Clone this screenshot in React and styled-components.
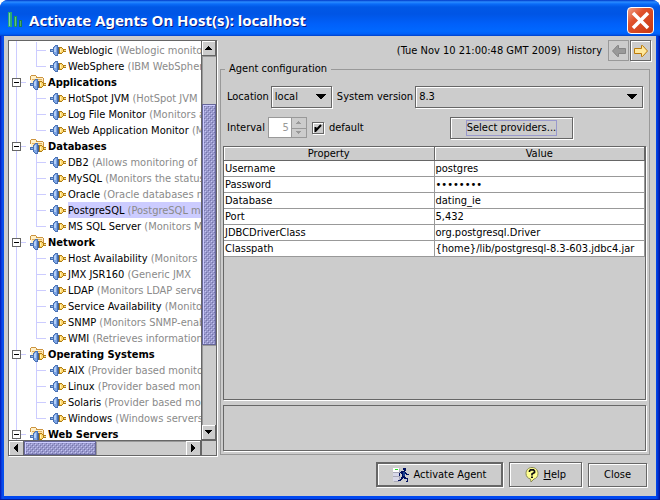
import React from "react";
import styled, { createGlobalStyle, css } from "styled-components";

const GlobalStyle = createGlobalStyle`
  *, *::before, *::after { box-sizing: border-box; }
  body { margin: 0; background: #fff; }
  body, button, input, select, table {
    font: 11px/16px "DejaVu Sans Condensed", Tahoma, "Noto Sans", sans-serif;
    color: #000;
  }
  svg { flex: none; }
`;

const etched = css`
  border: 1px solid #666;
  box-shadow: inset 1px 1px 0 #fff, 1px 1px 0 #fff;
`;

const Window = styled.main`
  height: 100vh;
  display: flex;
  flex-direction: column;
  background: linear-gradient(90deg, #0013a8 0, #0831d9 1px, #0855ee 3px, #0048f0 4px, #0048f0 calc(100% - 4px), #0040e0 calc(100% - 3px), #0020b8 calc(100% - 1px), #00138c 100%);
  border-bottom: 1px solid #001ea0;
  border-radius: 8px 8px 0 0;
  overflow: hidden;
`;

const TitleBar = styled.header`
  flex: none;
  height: 36px;
  display: flex;
  align-items: center;
  gap: 6px;
  padding: 4px 6px 0 7px;
  background: linear-gradient(#0038c8 0, #2a8cff 2px, #0a6cf8 4px, #0058e6 7px, #0055e5 14px, #0060fa 24px, #0068ff 31px, #0060f8 34px, #0040c8 36px);
`;

const Title = styled.h1`
  flex: 1;
  margin: 0;
  font: bold 15px/20px "Noto Sans", "Open Sans", sans-serif;
  color: #fff;
  text-shadow: 1px 1px 0 #0a1883;
  white-space: nowrap;
`;

const CloseBox = styled.button`
  width: 27px;
  height: 27px;
  padding: 0;
  border: 1px solid #fff;
  border-radius: 4px;
  background: linear-gradient(135deg, #f0a088, #e0522c 35%, #c83810);
  display: grid;
  place-items: center;
`;

const Content = styled.div`
  flex: 1;
  min-height: 0;
  margin: 0 4px 3px;
  padding: 4px 6px 9px 4px;
  background: #ccc;
  display: flex;
  flex-direction: column;
`;

const Split = styled.div`
  flex: 1;
  min-height: 0;
  display: grid;
  grid-template-columns: minmax(209px, 32.5%) minmax(0, 1fr);
  gap: 3px;
`;

const TreePane = styled.nav`
  border: 1px solid #666;
  box-shadow: 1px 1px 0 #fff;
  margin-bottom: 1px;
  min-height: 0;
  display: grid;
  grid-template: minmax(0, 1fr) 15px / minmax(0, 1fr) 15px;
`;

const TreeView = styled.ul`
  margin: 0;
  padding: 1px 0 0 3px;
  list-style: none;
  overflow: hidden;
  background: linear-gradient(#ccf, #ccf) 7px 0 / 1px 100% no-repeat #fff;
`;

const GroupRow = styled.div`
  height: 16px;
  display: flex;
  align-items: center;
  font-weight: bold;
  white-space: nowrap;
`;

const Expander = styled.button`
  flex: none;
  width: 9px;
  height: 9px;
  padding: 0;
  border: 1px solid #666;
  background: linear-gradient(#000, #000) 50% 50% / 5px 1px no-repeat #fff;
`;

const Stub = styled.span`
  flex: none;
  width: 5px;
  height: 1px;
  margin-right: 4px;
  background: #ccf;
`;

const Children = styled.ul`
  margin: 0;
  padding: 0 0 0 24px;
  list-style: none;
`;

const Leaf = styled.li`
  height: 16px;
  display: flex;
  align-items: center;
  white-space: nowrap;
  background: linear-gradient(#ccf, #ccf) 0 0 / 1px ${(p) => (p.$last ? "9px" : "100%")} no-repeat;

  &::before {
    content: "";
    flex: none;
    width: 10px;
    height: 1px;
    margin-right: 4px;
    background: #ccf;
  }
`;

const NodeText = styled.span`
  flex: 1 0 auto;
  margin-left: 2px;
  padding-top: 2px;
  line-height: 14px;
  background: ${(p) => (p.$selected ? "#ccf" : "transparent")};
`;

const Note = styled.span`
  color: #8a8a8a;
`;

const Bar = styled.div`
  display: flex;
  flex-direction: ${(p) => (p.$vertical ? "column" : "row")};
  ${(p) => (p.$vertical ? "border-left: 1px solid #666;" : "border-top: 1px solid #666;")}
  background: #ccc;
`;

const BarButton = styled.button`
  flex: none;
  width: ${(p) => (p.$vertical ? "auto" : "15px")};
  height: ${(p) => (p.$vertical ? "15px" : "auto")};
  padding: 0;
  border: 0 solid #666;
  border-right-width: 1px;
  border-bottom-width: ${(p) => (p.$vertical ? "1px" : "0")};
  background: #ccc;
  box-shadow: inset 1px 1px 0 #fff;
  display: grid;
  place-items: center;
`;

const Space = styled.div`
  flex: ${(p) => p.$size} 1 0;
  box-shadow: inset 1px 1px 0 #999;
`;

const Thumb = styled.div`
  flex: ${(p) => p.$size} 1 0;
  border: 1px solid #669;
  background:
    linear-gradient(#ccf, #ccf) 2px 2px / 4px 4px,
    #99c;
  background:
    conic-gradient(from 270deg at 1px 1px, #c4c4f4 90deg, transparent 0) 2px 2px / 4px 4px,
    conic-gradient(from 270deg at 1px 1px, #c4c4f4 90deg, transparent 0) 0 0 / 4px 4px,
    conic-gradient(from 270deg at 1px 1px, #7474ac 90deg, transparent 0) 3px 3px / 4px 4px,
    conic-gradient(from 270deg at 1px 1px, #7474ac 90deg, transparent 0) 1px 1px / 4px 4px,
    #99c;
  box-shadow: inset 1px 1px 0 #ccf;
`;

const Corner = styled.div`
  border-top: 1px solid #666;
  border-left: 1px solid #666;
  background: #ccc;
`;

const Side = styled.section`
  display: flex;
  flex-direction: column;
  min-width: 0;
  min-height: 0;
`;

const HistoryBar = styled.div`
  flex: none;
  display: flex;
  justify-content: flex-end;
  align-items: center;
  gap: 6px;
  white-space: nowrap;
`;

const HistoryButtons = styled.div`
  display: flex;
  gap: 1px;
  margin-right: -1px;
`;

const IconButton = styled.button`
  width: 21px;
  height: 21px;
  padding: 0;
  display: grid;
  place-items: center;
  background: #ccc;
  ${etched}
  ${(p) => p.disabled && "border-color: #999; box-shadow: none;"}
`;

const Config = styled.fieldset`
  flex: 1;
  min-width: 0;
  min-height: 0;
  margin: 0 0 2px;
  padding: 8px 3px 3px 2px;
  border: 1px solid #999;
  display: flex;
  flex-direction: column;
`;

const Legend = styled.legend`
  margin-left: 2px;
  padding: 0 4px;
`;

const FormRow = styled.div`
  flex: none;
  display: flex;
  align-items: center;
  gap: 2px;
  margin: 0 3px 0 4px;
  height: 23px;
  white-space: nowrap;
`;

const Gap = styled.div`
  flex: none;
  height: ${(p) => p.$size}px;
`;

const Combo = styled.div`
  display: grid;
  align-items: center;
  ${(p) => (p.$wide ? "flex: 1;" : "flex: none; width: 61px; margin-right: 3px;")}

  > * { grid-area: 1 / 1; }
  > svg { justify-self: end; margin-right: 6px; pointer-events: none; }
`;

const Select = styled.select`
  appearance: none;
  width: 100%;
  height: 22px;
  padding: 0 20px 0 3px;
  border-radius: 0;
  background: #ccc;
  ${etched}
`;

const Spinner = styled.div`
  flex: none;
  width: 39px;
  height: 21px;
  margin: 0 3px 0 1px;
  border: 1px solid #999;
  display: grid;
  grid-template: 1fr 1fr / 1fr 15px;
`;

const SpinInput = styled.input`
  grid-row: 1 / 3;
  min-width: 0;
  width: 100%;
  padding: 0 2px;
  border: 0;
  background: #fff;
  color: #999;
  text-align: right;
`;

const SpinButton = styled.button`
  padding: 0;
  min-height: 0;
  border: 0 solid #999;
  border-left-width: 1px;
  & + & { border-top-width: 1px; }
  background: #ccc;
  display: grid;
  place-items: center;
`;

const Check = styled.label`
  display: flex;
  align-items: center;
  gap: 5px;
`;

const CheckBox = styled.span`
  display: grid;
  place-items: center;
  > * { grid-area: 1 / 1; }
  > svg { pointer-events: none; }
`;

const Tick = styled.input`
  appearance: none;
  width: 12px;
  height: 12px;
  margin: 0;
  background: #ccc;
  ${etched}
`;

const Button = styled.button`
  display: flex;
  align-items: center;
  justify-content: center;
  gap: 4px;
  height: ${(p) => p.$height || 25}px;
  padding: 0 15px;
  background: #ccc;
  white-space: nowrap;
  ${etched}
  ${(p) => p.$primary && "border-width: 2px;"}
`;

const ProvidersButton = styled(Button)`
  margin-left: 84px;
`;

const FocusText = styled.span`
  line-height: 14px;
  border: 1px solid #99c;
`;

const TableFrame = styled.div`
  flex: 1;
  min-height: 0;
  border: 1px solid #666;
  box-shadow: 1px 1px 0 #fff;
`;

const Table = styled.table`
  width: 100%;
  table-layout: fixed;
  border-collapse: separate;
  border-spacing: 0;
`;

const Th = styled.th`
  height: 14px;
  padding: 0;
  line-height: 13px;
  font-weight: normal;
  border-bottom: 1px solid #666;
  border-right: 1px solid #666;
  box-shadow: inset 1px 1px 0 #fff;
`;

const Td = styled.td`
  height: 16px;
  padding: 0 0 0 1px;
  line-height: 15px;
  background: #fff;
  border-bottom: 1px solid #999;
  border-right: 1px solid #999;
  white-space: nowrap;
  overflow: hidden;
`;

const Description = styled.div`
  flex: none;
  height: 46px;
  margin-top: 5px;
  border: 1px solid #666;
  box-shadow: 1px 1px 0 #fff;
`;

const Footer = styled.footer`
  flex: none;
  display: flex;
  justify-content: flex-end;
  align-items: center;
  gap: 6px;
  padding: 5px 3px 0 0;
`;

const Plug = () => (
  <g>
    <path d="M0 7h3v3H0z" fill="#4870b0" />
    <path d="M1 8h2v1H1z" fill="#90b4e8" />
    <path d="M3 5h1V4h1V3h3v11H5v-1H4v-1H3z" fill="#4a72b4" />
    <path d="M4 5h1V4h2v9H5v-1H4z" fill="#7ca4e4" />
    <path d="M4 6h1V5h1v5H4z" fill="#b4d0f8" />
    <path d="M8 5h1v7H8z" fill="#486088" />
    <path d="M9 5h3v1h1v1h3v1h-2v1h2v1h-3v1h-1v1H9z" fill="#b07c10" />
    <path d="M10 6h2v1h1v3h-1v1h-2z" fill="#ffd870" />
    <path d="M10 7h1v3h-1z" fill="#fff4c0" />
    <path d="M14 8h2v1h-2z" fill="#f4dc98" />
  </g>
);

const PlugIcon = () => (
  <svg width="16" height="16" viewBox="0 0 16 16" shapeRendering="crispEdges" aria-hidden="true">
    <Plug />
  </svg>
);

const FolderIcon = () => (
  <svg width="16" height="16" viewBox="0 0 16 16" shapeRendering="crispEdges" aria-hidden="true">
    <path d="M0 2h1V1h5v1h1v1h6v1h1v8H1V6H0z" fill="#cc9440" />
    <path d="M1 2h5v2h7v7H1z" fill="#fff0c8" />
    <path d="M3 6h10v4H3z" fill="#ffe0a0" />
    <path d="M2 5h10v1H2z" fill="#e0b060" />
    <g transform="translate(0 2)"><Plug /></g>
  </svg>
);

const ARROWS = {
  up: [9, 4, "M4 0h1v1h1v1h1v1h1v1H1V3h1V2h1V1h1z"],
  down: [9, 4, "M1 0h7v1H7v1H6v1H5v1H4V3H3V2H2V1H1z"],
  left: [4, 8, "M0 3h1V2h1V1h1V0h1v8H3V7H2V6H1V5H0z"],
  right: [4, 8, "M0 0h1v1h1v1h1v1h1v2H3v1H2v1H1v1H0z"],
  combo: [10, 5, "M0 0h10v1H9v1H8v1H7v1H6v1H4V4H3V3H2V2H1V1H0z"],
  spinUp: [5, 3, "M2 0h1v1h1v1h1v1H0V2h1V1h1z"],
  spinDown: [5, 3, "M0 0h5v1H4v1H3v1H2V2H1V1H0z"],
};

const Arrow = ({ kind, color = "#000" }) => {
  const [w, h, d] = ARROWS[kind];
  return (
    <svg width={w} height={h} viewBox={`0 0 ${w} ${h}`} shapeRendering="crispEdges" aria-hidden="true">
      <path d={d} fill={color} />
    </svg>
  );
};

const HistoryArrow = ({ forward }) => (
  <svg width="16" height="14" viewBox="0 0 16 14" aria-hidden="true">
    <path
      d={forward ? "M1.5 4.5h7v-3h1L14.5 7l-5 5.500h-1v-3h-7z" : "M14.500 4.500h-7v-3h-1L1.500 7l5 5.500h1v-3h7z"}
      fill={forward ? "#ffe89c" : "#999"}
      stroke={forward ? "#bc7a08" : "#858585"}
    />
  </svg>
);

const BarsIcon = () => (
  <svg width="16" height="18" viewBox="0 0 16 18" aria-hidden="true">
    <path d="M1 1h4v15H1z" fill="#28a878" />
    <path d="M2 2h1v13H2z" fill="#80d8a8" />
    <path d="M7 5h3v11H7z" fill="#209858" />
    <path d="M8 6h1v9H8z" fill="#60c088" />
    <path d="M12 9h3v7h-3z" fill="#188048" />
    <path d="M13 10h1v5h-1z" fill="#50a870" />
  </svg>
);

const RunIcon = () => (
  <svg width="16" height="16" viewBox="0 0 16 16" shapeRendering="crispEdges" aria-hidden="true">
    <path d="M0 1h6v13H0z" fill="#d8d8e8" />
    <path d="M0 1h6v4H0z" fill="#fff" />
    <path d="M2 2h3v1H2z" fill="#20e020" />
    <path d="M0 5h6v1H0zM0 9h6v1H0zM6 2h1v12H6zM1 14h5v1H1z" fill="#a8a8b8" />
    <path d="M10 1h3v3h-1v1h1v1h1v1h2v1h-3V7h-1v3h1v1h2v4h-2v-1h1v-2h-3v-1h-1v1H9v1H8v1H5v-1h2v-1h1v-2h1V7H8V6H7v3H6V6h1V5h1V4h3V3h-1z" fill="#001060" />
    <path d="M10 5h2v4h-2z" fill="#184090" />
  </svg>
);

const HelpIcon = () => (
  <svg width="14" height="16" viewBox="0 0 14 16" aria-hidden="true">
    <path d="M7 .5c3.700 0 6 2.500 6 6 0 3-1.700 5-4 5.500L6 15l-.5-3C3 11.500 1 9.500 1 6.500c0-3.500 2.300-6 6-6z" fill="#ffff90" stroke="#888858" />
    <path d="M4.500 5V4l1-1.200h3l1 1.200v1.500L7 7v1.500" fill="none" stroke="#101010" strokeWidth="1.700" />
    <path d="M6 9.500h2v1.500H6z" fill="#101010" />
  </svg>
);

const TREE = [
  { items: [["Weblogic", "(Weblogic monitor"], ["WebSphere", "(IBM WebSpher"]] },
  { name: "Applications", items: [["HotSpot JVM", "(HotSpot JVM"], ["Log File Monitor", "(Monitors a"], ["Web Application Monitor", "(Mo"]] },
  { name: "Databases", items: [["DB2", "(Allows monitoring of D"], ["MySQL", "(Monitors the status"], ["Oracle", "(Oracle databases m"], ["PostgreSQL", "(PostgreSQL mo"], ["MS SQL Server", "(Monitors MS"]] },
  { name: "Network", items: [["Host Availability", "(Monitors a"], ["JMX JSR160", "(Generic JMX"], ["LDAP", "(Monitors LDAP server"], ["Service Availability", "(Monitors"], ["SNMP", "(Monitors SNMP-enab"], ["WMI", "(Retrieves information"]] },
  { name: "Operating Systems", items: [["AIX", "(Provider based monitor"], ["Linux", "(Provider based monit"], ["Solaris", "(Provider based mon"], ["Windows", "(Windows servers"]] },
  { name: "Web Servers", items: [] },
];

const PROPERTIES = [
  ["Username", "postgres"],
  ["Password", "••••••••"],
  ["Database", "dating_ie"],
  ["Port", "5,432"],
  ["JDBCDriverClass", "org.postgresql.Driver"],
  ["Classpath", "{home}/lib/postgresql-8.3-603.jdbc4.jar"],
];

const Group = ({ name, items }) => (
  <li>
    {name && (
      <GroupRow>
        <Expander aria-label={`Collapse ${name}`} />
        <Stub />
        <FolderIcon />
        <NodeText>{name}</NodeText>
      </GroupRow>
    )}
    <Children>
      {items.map(([label, note], i) => (
        <Leaf key={label} $last={i === items.length - 1}>
          <PlugIcon />
          <NodeText $selected={label === "PostgreSQL"}>
            {label} <Note>{note}</Note>
          </NodeText>
        </Leaf>
      ))}
    </Children>
  </li>
);

const ScrollBar = ({ vertical, sizes }) => (
  <Bar $vertical={vertical}>
    <BarButton $vertical={vertical} aria-label={vertical ? "Scroll up" : "Scroll left"}>
      <Arrow kind={vertical ? "up" : "left"} />
    </BarButton>
    {sizes[0] > 0 && <Space $size={sizes[0]} />}
    <Thumb $size={sizes[1]} />
    <Space $size={sizes[2]} />
    <BarButton $vertical={vertical} aria-label={vertical ? "Scroll down" : "Scroll right"}>
      <Arrow kind={vertical ? "down" : "right"} />
    </BarButton>
  </Bar>
);

export default function App() {
  return (
    <>
      <GlobalStyle />
      <Window>
        <TitleBar>
          <BarsIcon />
          <Title>Activate Agents On Host(s): localhost</Title>
          <CloseBox aria-label="Close window">
            <svg width="19" height="19" viewBox="0 0 19 19" aria-hidden="true">
              <path d="M2 2l15 15M17 2L2 17" stroke="#fff" strokeWidth="3.500" />
            </svg>
          </CloseBox>
        </TitleBar>
        <Content>
          <Split>
            <TreePane aria-label="Agents">
              <TreeView>
                {TREE.map((g, i) => <Group key={i} {...g} />)}
              </TreeView>
              <ScrollBar vertical sizes={[48, 240, 80]} />
              <ScrollBar sizes={[0, 70, 91]} />
              <Corner />
            </TreePane>
            <Side>
              <HistoryBar>
                <span>(Tue Nov 10 21:00:48 GMT 2009)</span>
                <span>History</span>
                <HistoryButtons>
                  <IconButton disabled aria-label="Back"><HistoryArrow /></IconButton>
                  <IconButton aria-label="Forward"><HistoryArrow forward /></IconButton>
                </HistoryButtons>
              </HistoryBar>
              <Config>
                <Legend>Agent configuration</Legend>
                <FormRow>
                  <label htmlFor="location">Location</label>
                  <Combo>
                    <Select id="location"><option>local</option></Select>
                    <Arrow kind="combo" />
                  </Combo>
                  <label htmlFor="version">System version</label>
                  <Combo $wide>
                    <Select id="version"><option>8.3</option></Select>
                    <Arrow kind="combo" />
                  </Combo>
                </FormRow>
                <Gap $size={8} />
                <FormRow>
                  <label htmlFor="interval">Interval</label>
                  <Spinner>
                    <SpinInput id="interval" defaultValue="5" disabled />
                    <SpinButton disabled aria-label="Increase"><Arrow kind="spinUp" color="#999" /></SpinButton>
                    <SpinButton disabled aria-label="Decrease"><Arrow kind="spinDown" color="#999" /></SpinButton>
                  </Spinner>
                  <Check>
                    <CheckBox>
                      <Tick type="checkbox" defaultChecked />
                      <svg width="8" height="8" viewBox="0 0 8 8" aria-hidden="true">
                        <path d="M1.500 3v4L7 1" fill="none" stroke="#000" strokeWidth="2" />
                      </svg>
                    </CheckBox>
                    default
                  </Check>
                  <ProvidersButton $height={22}><FocusText>Select providers...</FocusText></ProvidersButton>
                </FormRow>
                <Gap $size={7} />
                <TableFrame>
                  <Table>
                    <thead>
                      <tr><Th scope="col">Property</Th><Th scope="col">Value</Th></tr>
                    </thead>
                    <tbody>
                      {PROPERTIES.map(([name, value]) => (
                        <tr key={name}><Td>{name}</Td><Td>{value}</Td></tr>
                      ))}
                    </tbody>
                  </Table>
                </TableFrame>
                <Description />
              </Config>
            </Side>
          </Split>
          <Footer>
            <Button $primary><RunIcon />Activate Agent</Button>
            <Button><HelpIcon /><span><u>H</u>elp</span></Button>
            <Button $height={24}>Close</Button>
          </Footer>
        </Content>
      </Window>
    </>
  );
}
